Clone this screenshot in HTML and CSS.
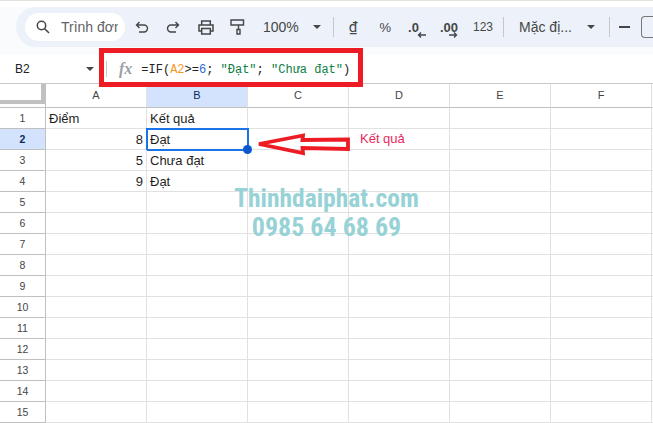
FILE: index.html
```html
<!DOCTYPE html>
<html lang="vi">
<head>
<meta charset="utf-8">
<title>Sheet</title>
<link rel="stylesheet" href="styles.css">
</head>
<body>
<div class="topline"></div>
<div class="chrome">
  <div class="toolbar">
    <div class="search">
      <svg class="ico" viewBox="0 0 16 16" width="16" height="16"><circle cx="6.500" cy="6.500" r="4.200" fill="none" stroke="#444746" stroke-width="1.500"/><path d="M9.700 9.700 14 14" stroke="#444746" stroke-width="1.600" fill="none"/></svg>
      <span class="search-t">Trình đơn</span>
    </div>
    <div class="tools">
      <svg class="t-undo" viewBox="0 0 14 12" width="14" height="12"><path d="M4.500 1 1.500 4l3 3M1.500 4H9a3.300 3.300 0 0 1 0 7H4" fill="none" stroke="#444746" stroke-width="1.400"/></svg>
      <svg class="t-redo" viewBox="0 0 14 12" width="14" height="12"><path d="M9.500 1l3 3-3 3M12.500 4H5a3.300 3.300 0 0 0 0 7h5" fill="none" stroke="#444746" stroke-width="1.400"/></svg>
      <svg class="t-print" viewBox="0 0 16 15" width="16" height="15"><path d="M3.700 4.500V1h8.600v3.500M3.700 11H1V5h14v6h-2.700M3.700 8.500h8.600V14H3.700z" fill="none" stroke="#444746" stroke-width="1.500"/></svg>
      <svg class="t-paint" viewBox="0 0 15 16" width="15" height="16"><path d="M1 1h12.500v5H1zM8.500 6v4.500M7 10.500h3V15H7z" fill="none" stroke="#444746" stroke-width="1.400"/></svg>
      <span class="zoom-t">100%</span>
      <span class="caret caret-zoom"></span>
      <span class="sep sep-a"></span>
      <span class="dong">₫</span>
      <span class="pct">%</span>
      <span class="dec dec-a">.0<svg class="arrow" viewBox="0 0 9 6" width="9" height="6"><path d="M9 3H2M4 .5 1.500 3 4 5.500" fill="none" stroke="#444746" stroke-width="1.400"/></svg></span>
      <span class="dec dec-b">.00<svg class="arrow" viewBox="0 0 9 6" width="9" height="6"><path d="M0 3h7M5 .5 7.500 3 5 5.500" fill="none" stroke="#444746" stroke-width="1.400"/></svg></span>
      <span class="num123">123</span>
      <span class="sep sep-b"></span>
      <span class="font-t">Mặc đị...</span>
      <span class="caret caret-font"></span>
      <span class="sep sep-c"></span>
      <span class="minus"></span>
      <span class="sizebox"></span>
    </div>
  </div>
</div>
<div class="formula">
  <span class="namebox">B2</span>
  <span class="caret caret-name"></span>
  <span class="sep sep-f"></span>
  <span class="fx">fx</span>
  <span class="ftext">=IF(<span class="f-ref">A2</span>&gt;=<span class="f-num">6</span>; <span class="f-str">"Đạt"</span>; <span class="f-str">"Chưa đạt"</span>)</span>
</div>
<div class="grid">
  <div class="row head">
    <div class="rh corner"><div class="corner-in"></div></div>
    <div class="c ch">A</div><div class="c ch sel">B</div><div class="c ch">C</div><div class="c ch">D</div><div class="c ch">E</div><div class="c ch">F</div><div class="c edge"></div>
  </div>
  <div class="row"><div class="rh">1</div><div class="c">Điểm</div><div class="c">Kết quả</div><div class="c"></div><div class="c"></div><div class="c"></div><div class="c"></div><div class="c edge"></div></div>
  <div class="row"><div class="rh rsel">2</div><div class="c num">8</div><div class="c active">Đạt<span class="handle"></span></div><div class="c"></div><div class="c"></div><div class="c"></div><div class="c"></div><div class="c edge"></div></div>
  <div class="row"><div class="rh">3</div><div class="c num">5</div><div class="c">Chưa đạt</div><div class="c"></div><div class="c"></div><div class="c"></div><div class="c"></div><div class="c edge"></div></div>
  <div class="row"><div class="rh">4</div><div class="c num">9</div><div class="c">Đạt</div><div class="c"></div><div class="c"></div><div class="c"></div><div class="c"></div><div class="c edge"></div></div>
  <div class="row"><div class="rh">5</div><div class="c"></div><div class="c"></div><div class="c"></div><div class="c"></div><div class="c"></div><div class="c"></div><div class="c edge"></div></div>
  <div class="row"><div class="rh">6</div><div class="c"></div><div class="c"></div><div class="c"></div><div class="c"></div><div class="c"></div><div class="c"></div><div class="c edge"></div></div>
  <div class="row"><div class="rh">7</div><div class="c"></div><div class="c"></div><div class="c"></div><div class="c"></div><div class="c"></div><div class="c"></div><div class="c edge"></div></div>
  <div class="row"><div class="rh">8</div><div class="c"></div><div class="c"></div><div class="c"></div><div class="c"></div><div class="c"></div><div class="c"></div><div class="c edge"></div></div>
  <div class="row"><div class="rh">9</div><div class="c"></div><div class="c"></div><div class="c"></div><div class="c"></div><div class="c"></div><div class="c"></div><div class="c edge"></div></div>
  <div class="row"><div class="rh">10</div><div class="c"></div><div class="c"></div><div class="c"></div><div class="c"></div><div class="c"></div><div class="c"></div><div class="c edge"></div></div>
  <div class="row"><div class="rh">11</div><div class="c"></div><div class="c"></div><div class="c"></div><div class="c"></div><div class="c"></div><div class="c"></div><div class="c edge"></div></div>
  <div class="row"><div class="rh">12</div><div class="c"></div><div class="c"></div><div class="c"></div><div class="c"></div><div class="c"></div><div class="c"></div><div class="c edge"></div></div>
  <div class="row"><div class="rh">13</div><div class="c"></div><div class="c"></div><div class="c"></div><div class="c"></div><div class="c"></div><div class="c"></div><div class="c edge"></div></div>
  <div class="row"><div class="rh">14</div><div class="c"></div><div class="c"></div><div class="c"></div><div class="c"></div><div class="c"></div><div class="c"></div><div class="c edge"></div></div>
  <div class="row"><div class="rh">15</div><div class="c"></div><div class="c"></div><div class="c"></div><div class="c"></div><div class="c"></div><div class="c"></div><div class="c edge"></div></div>
</div>
<div class="redbox"></div>
<svg class="red-arrow" viewBox="0 0 100 24" width="100" height="24"><path d="M4 12 L48 3.500 L47.500 8 L93 7.500 L93 17 L47.500 16 L48 21 Z" fill="none" stroke="#ed1c24" stroke-width="3.800"/></svg>
<span class="note">Kết quả</span>
<div class="wm wm1">Thinhdaiphat.com</div>
<div class="wm wm2">0985 64 68 69</div>
</body>
</html>
```
FILE: styles.css
```css
* { box-sizing: border-box; }
html, body { margin: 0; padding: 0; width: 653px; height: 423px; overflow: hidden; background: #fff; font-family: "Liberation Sans", Arial, sans-serif; color: #222; }
body { position: relative; }
.topline { height: 7px; background: #fff; border-top: 1px solid #e2e3df; }
.chrome { height: 48px; background: #f9fbfd; padding-left: 16px; }
.toolbar { height: 40px; background: #edf2fa; border-radius: 20px 0 0 20px; display: flex; align-items: center; padding-left: 9px; }
.search { width: 100px; height: 28px; background: #fff; border-radius: 14px; display: flex; align-items: center; padding-left: 10px; gap: 10px; overflow: hidden; flex: none; }
.search-t { font-size: 14px; color: #5f6368; white-space: nowrap; width: 57px; overflow: hidden; flex: none; }
.tools { position: relative; flex: 1; height: 40px; display: flex; align-items: center; }
.tools > * { flex: none; }
.t-undo { margin-left: 10px; }
.t-redo { margin-left: 17px; }
.t-print { margin-left: 18px; }
.t-paint { margin-left: 16px; }
.zoom-t { font-size: 14px; color: #444746; margin-left: 18px; }
.caret { display: block; width: 0; height: 0; border-left: 4.500px solid transparent; border-right: 4.500px solid transparent; border-top: 4.500px solid #444746; }
.caret-zoom { margin-left: 14px; }
.sep { display: block; width: 1px; height: 20px; background: #c7c7c7; }
.sep-a { margin-left: 12px; }
.dong { font-family: Roboto, sans-serif; font-size: 15px; color: #444746; margin-left: 15px; }
.pct { font-size: 13px; color: #444746; margin-left: 22px; }
.dec { font-size: 13px; font-weight: 700; color: #444746; position: relative; }
.dec-a { margin-left: 17px; }
.dec-b { margin-left: 21px; }
.dec-a .arrow { right: -7px; }
.arrow { position: absolute; right: 0; top: 12px; }
.num123 { font-size: 12px; color: #444746; margin-left: 15px; }
.sep-b { margin-left: 10px; }
.font-t { font-size: 14px; color: #444746; margin-left: 15px; }
.caret-font { margin-left: 15px; }
.sep-c { margin-left: 14px; }
.minus { display: block; width: 11px; height: 2px; background: #444746; margin-left: 9px; }
.sizebox { display: block; width: 16px; height: 22px; margin-left: 11px; border: 1px solid #747775; border-radius: 4px 0 0 4px; border-right: 0; }
.formula { height: 28px; display: flex; align-items: center; background: #fff; position: relative; }
.namebox { font-size: 12px; color: #222; margin-left: 15px; width: 71px; flex: none; }
.caret-name { flex: none; }
.sep-f { height: 16px; margin-left: 12px; flex: none; }
.fx { font-family: "Liberation Serif", serif; font-style: italic; font-weight: 700; font-size: 16px; color: #9aa0a6; margin-left: 12px; flex: none; }
.ftext { font-family: "Liberation Mono", monospace; font-size: 12px; line-height: 16px; padding-top: 2px; color: #222; margin-left: 9px; white-space: pre; }
.f-ref { color: #f7981d; }
.f-num { color: #2a6ad3; }
.f-str { color: #0b8043; }
.grid { display: flex; flex-direction: column; border-top: 1px solid #c7c7c7; }
.row { display: flex; height: 21px; flex: none; }
.rh { width: 46px; flex: none; border-right: 1px solid #c0c0c0; border-bottom: 1px solid #c0c0c0; text-align: center; font-size: 10.500px; line-height: 20px; color: #444; }
.rsel { background: #d3e3fd; font-weight: 700; color: #0b2a5c; }
.c { width: 101px; flex: none; border-right: 1px solid #e1e1e1; border-bottom: 1px solid #e1e1e1; font-size: 13px; line-height: 22px; padding-left: 3px; padding-right: 3px; color: #1f1f1f; white-space: nowrap; position: relative; }
.c.edge { width: 2px; padding: 0; border-right: 0; }
.num { text-align: right; }
.head { height: 24px; }
.head .rh, .head .ch { border-bottom: 1px solid #c0c0c0; line-height: 23px; text-align: center; font-size: 11px; color: #444; padding: 0; }
.corner-in { height: 20px; border-right: 4px solid #c0c0c0; border-bottom: 4px solid #c0c0c0; }
.ch.sel { background: #d3e3fd; color: #0b2a5c; }
.active { outline: 2px solid #1a73e8; outline-offset: -1px; }
.handle { position: absolute; right: -5px; bottom: -5px; width: 9px; height: 9px; border-radius: 50%; background: #0b57d0; z-index: 2; }
.redbox { position: absolute; left: 99px; top: 48px; width: 264px; height: 39px; border: 5px solid #ed1c24; }
.red-arrow { position: absolute; left: 255px; top: 132px; }
.note { position: absolute; left: 360px; top: 131px; font-size: 13px; color: #e8295c; }
.wm { position: absolute; left: 0; width: 653px; text-align: center; font-family: "Roboto Condensed", "Liberation Sans Narrow", "Liberation Sans", sans-serif; font-weight: 700; color: #97d2d6; }
.wm1 { top: 183px; font-size: 25.500px; }
.wm2 { top: 212px; font-size: 26px; }
```
